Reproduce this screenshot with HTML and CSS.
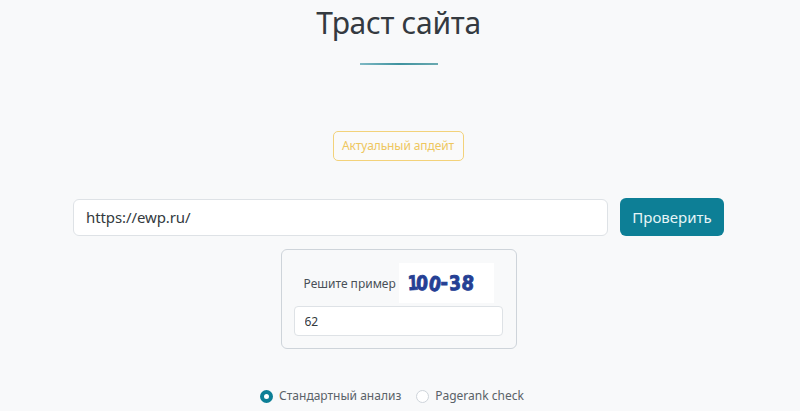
FILE: index.html
```html
<!DOCTYPE html>
<html lang="ru">
<head>
<meta charset="utf-8">
<title>Траст сайта</title>
<link rel="stylesheet" href="styles.css">
</head>
<body>
<main class="page">
  <h1 class="title">Траст сайта</h1>
  <div class="divider"></div>
  <a class="badge">Актуальный апдейт</a>
  <form class="check">
    <input class="url" type="text" value="https://ewp.ru/">
    <button class="submit" type="button">Проверить</button>
  </form>
  <div class="captcha-card">
    <div class="captcha-row">
      <span class="captcha-label">Решите пример</span>
      <div class="captcha-img" aria-label="100-38"><span class="c1">1</span><span class="c2">0</span><span class="c3">0</span><span class="c4">-</span><span class="c5">3</span><span class="c6">8</span></div>
    </div>
    <input class="answer" type="text" value="62">
  </div>
  <div class="modes">
    <label class="mode"><span class="radio on"></span>Стандартный анализ</label>
    <label class="mode"><span class="radio"></span>Pagerank check</label>
  </div>
</main>
</body>
</html>
```
FILE: styles.css
```css
* { box-sizing: border-box; }
html, body { margin: 0; height: 411px; overflow: hidden; }
body {
  background: #f8f9fa;
  color: #343a40;
  font-family: "Noto Sans", "Open Sans", sans-serif;
}
.page { display: flex; flex-direction: column; align-items: center; }
.title {
  margin: 0;
  height: 45px;
  font-size: 30px;
  line-height: 45px;
  font-weight: 400;
  letter-spacing: -0.3px;
  margin-left: -3px;
}
.divider {
  width: 78px;
  height: 2px;
  margin-top: 18px;
  margin-left: -2px;
  background: linear-gradient(90deg, #7fb9c4, #3f939f 50%, #6aa9b0);
}
.badge {
  margin-top: 66px;
  margin-left: -4px;
  width: 131px;
  height: 30px;
  border: 1px solid #f3d27a;
  border-radius: 5px;
  color: #eec75f;
  font-size: 12px;
  letter-spacing: -0.1px;
  line-height: 28px;
  text-align: center;
  background: #fafafa;
}
.check {
  display: flex;
  align-items: center;
  gap: 12px;
  margin-top: 37px;
  width: 651px;
  margin-left: -3px;
}
.url {
  flex: 1;
  height: 37px;
  padding: 0 12px;
  border: 1px solid #dee2e6;
  border-radius: 6px;
  background: #fff;
  color: #343a40;
  font: 400 15px "Noto Sans", "Open Sans", sans-serif;
  letter-spacing: -0.1px;
}
.submit {
  width: 104px;
  height: 38px;
  border: 0;
  border-radius: 6px;
  background: #0d7f96;
  color: #e6f5f7;
  font: 400 15px "Noto Sans", "Open Sans", sans-serif;
}
.captcha-card {
  width: 236px;
  height: 100px;
  margin-top: 13px;
  padding: 13px 13px 0 12px;
  border: 1px solid #ced4da;
  border-radius: 6px;
  margin-left: -3px;
}
.captcha-row { display: flex; align-items: center; padding-left: 10px; height: 40px; }
.captcha-label { font-size: 12px; color: #495057; width: 95px; flex: none; }
.captcha-img {
  width: 95px;
  height: 40px;
  background: #fff;
  display: flex;
  align-items: center;
  padding-left: 7px;
  color: #253f94;
  font: 700 20px "DejaVu Sans", sans-serif;
  -webkit-text-stroke: 0.9px #253f94;
}
.captcha-img span { display: inline-block; }
.c1 { transform: scaleX(.75) rotate(-3deg); margin-right: -4px; }
.c2 { transform: scaleX(.85) rotate(4deg); margin-right: -1px; }
.c3 { transform: scaleX(.85) translateY(1px) rotate(14deg); margin-right: -2px; }
.c4 { transform: scaleX(.9) translateY(-1px); margin-right: -1px; }
.c5 { transform: scaleX(.85) rotate(-4deg); margin-right: -1px; }
.c6 { transform: scaleX(.9) rotate(6deg); }
.answer {
  display: block;
  width: 209px;
  height: 30px;
  margin-top: 3px;
  padding: 0 10px;
  border: 1px solid #dee2e6;
  border-radius: 4px;
  background: #fff;
  color: #343a40;
  font: 400 12px "Noto Sans", "Open Sans", sans-serif;
}
.modes {
  display: flex;
  gap: 15px;
  margin-top: 39px;
  margin-left: -16px;
  font-size: 12px;
  color: #5a6268;
}
.mode { display: flex; align-items: center; gap: 6px; line-height: 16px; }
.radio {
  width: 13px;
  height: 13px;
  border-radius: 50%;
  border: 1px solid #ced4da;
  background: #fff;
}
.radio.on { border: 4px solid #0d7f96; }
```
